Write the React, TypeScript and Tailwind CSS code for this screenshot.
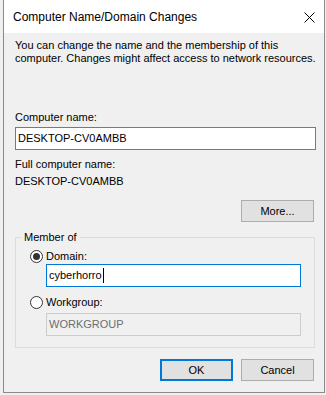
import React from "react";

const Radio = ({ checked, label }: { checked?: boolean; label: string }) => (
  <div className="flex items-center h-[13px] leading-[13px]">
    <span className="w-[13px] h-[13px] rounded-full border border-[#333333] bg-white flex items-center justify-center">
      {checked && <span className="w-[7px] h-[7px] rounded-full bg-[#333333]" />}
    </span>
    <span className="ml-[3px]">{label}</span>
  </div>
);

const Button = ({ label, primary }: { label: string; primary?: boolean }) => (
  <div
    className={
      "w-[73px] h-[22px] flex items-center justify-center bg-[#e1e1e1] " +
      (primary ? "border-2 border-[#0078d7]" : "border border-[#adadad]")
    }
  >
    {label}
  </div>
);

export default function App() {
  return (
    <div className="w-[326px] h-[395px] bg-[#f0f0f0] overflow-hidden text-[11px] leading-[13px] text-black font-['Liberation_Sans',Arial,sans-serif]">
      <div className="ml-[3px] w-[322px] h-[393px] border-x border-b border-[#8a8a8a] bg-[#f0f0f0] flex flex-col">
        {/* title bar */}
        <div className="h-[33px] bg-white flex items-center justify-between pl-[9px] pr-[9px]">
          <span className="text-[12px] leading-[16px]">Computer Name/Domain Changes</span>
          <svg width="11" height="11" viewBox="0 0 11 11" className="mt-[1px]">
            <path d="M0.5 0.5 L10.5 10.5 M10.5 0.5 L0.5 10.5" stroke="#000" strokeWidth="1" />
          </svg>
        </div>

        <div className="pl-[11px] pt-[6px]">
          <p>
            You can change the name and the membership of this
            <br />
            computer. Changes might affect access to network resources.
          </p>

          <div className="mt-[46px]">Computer name:</div>
          <div className="mt-[3px] w-[301px] h-[23px] bg-white border border-[#7a7a7a] flex items-center pl-[2px]">
            DESKTOP-CV0AMBB
          </div>

          <div className="mt-[8px]">Full computer name:</div>
          <div className="mt-[4px]">DESKTOP-CV0AMBB</div>

          <div className="mt-[12px] w-[299px] flex justify-end">
            <Button label="More..." />
          </div>

          <fieldset className="mt-[9px] w-[300px] border border-[#dcdcdc] pb-[11px]">
            <legend className="ml-[5px] px-[3px] leading-[13px]">Member of</legend>
            <div className="pl-[14px]">
              <div className="mt-[6px]">
                <Radio checked label="Domain:" />
              </div>
              <div className="mt-[1px] ml-[16px] w-[255px] h-[23px] bg-white border border-[#0078d7] flex items-center pl-[2px]">
                cyberhorro
                <span className="w-[1px] h-[15px] bg-black ml-[1px]" />
              </div>
              <div className="mt-[9px]">
                <Radio label="Workgroup:" />
              </div>
              <div className="mt-[4px] ml-[16px] w-[255px] h-[23px] bg-[#f0f0f0] border border-[#cccccc] flex items-center pl-[2px] text-[#6d6d6d]">
                WORKGROUP
              </div>
            </div>
          </fieldset>

          <div className="mt-[11px] w-[299px] flex justify-end gap-[8px]">
            <Button label="OK" primary />
            <Button label="Cancel" />
          </div>
        </div>
      </div>
    </div>
  );
}
